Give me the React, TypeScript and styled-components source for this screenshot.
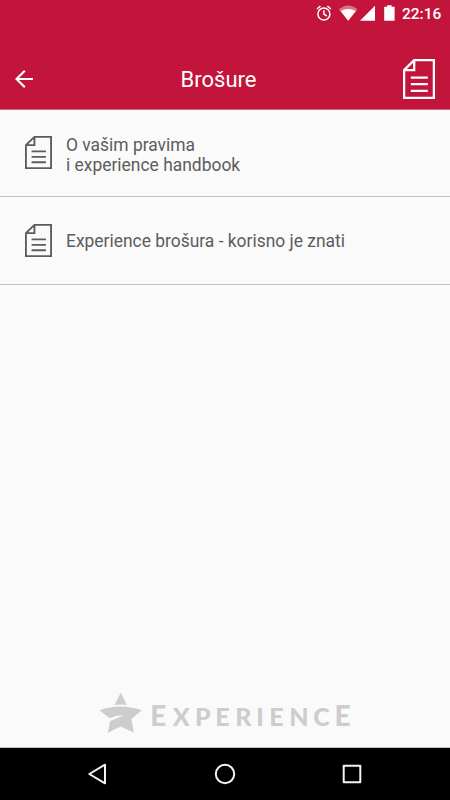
import React from "react";
import styled, { createGlobalStyle } from "styled-components";

const GlobalStyle = createGlobalStyle`
  * { box-sizing: border-box; }
  body { margin: 0; background: #fafafa; }
`;

const Screen = styled.div`
  display: flex;
  flex-direction: column;
  width: 450px;
  height: 800px;
  overflow: hidden;
  background: #fafafa;
  font-family: Roboto, "Liberation Sans", sans-serif;
`;

const StatusBar = styled.div`
  display: flex;
  justify-content: flex-end;
  height: 27px;
  flex: none;
  padding-right: 9px;
  background: #c3143b;
  color: #fff;
`;

const StatusIcons = styled.svg`
  width: 84px;
  height: 27px;
  margin-right: 2px;
`;

const Clock = styled.time`
  width: 39px;
  font-size: 15.5px;
  font-weight: 500;
  line-height: 28px;
  white-space: nowrap;
`;

const AppBar = styled.header`
  display: grid;
  grid-template-columns: 48px 1fr 48px;
  height: 83px;
  flex: none;
  padding-top: 22px;
  background: #c3143b;
  border-bottom: 1px solid #c9687d;
  color: #fff;
`;

const BackButton = styled.button`
  height: 60px;
  padding: 0;
  border: 0;
  background: none;
  color: inherit;
  svg { display: block; }
`;

const Title = styled.h1`
  margin: 0 13px 0 0;
  font-size: 22px;
  font-weight: 400;
  line-height: 62px;
  text-align: center;
`;

const HeaderIcon = styled.div`
  padding: 10px 0 0 1px;
`;

const DocumentSvg = styled.svg`
  display: block;
  flex: none;
`;

const List = styled.ul`
  flex: 1;
  margin: 0;
  padding: 0;
  list-style: none;
`;

const Row = styled.li<{ $height: number }>`
  display: flex;
  align-items: center;
  gap: 14px;
  height: ${(p) => p.$height}px;
  padding: 0 25px 1px;
  border-bottom: 1px solid #c4c4c4;
  color: #5c5c5c;
`;

const RowLabel = styled.span<{ $inset: number }>`
  padding-top: ${(p) => p.$inset}px;
  font-size: 17.43px;
  line-height: 20px;
  white-space: pre-line;
`;

const Footer = styled.footer`
  height: 60px;
  flex: none;
  padding-left: 96px;
  border-bottom: 1px solid #c4c4c4;
  svg { display: block; }
`;

const NavBar = styled.nav`
  display: flex;
  justify-content: center;
  gap: 79px;
  height: 52px;
  flex: none;
  padding-top: 2px;
  background: #000;
`;

const NavButton = styled.button`
  width: 48px;
  height: 48px;
  padding: 0;
  border: 0;
  background: none;
  svg { display: block; }
`;

function DocumentIcon({ width, height, stroke }: { width: number; height: number; stroke: number }) {
  return (
    <DocumentSvg width={width} height={height} viewBox="0 0 32 40" preserveAspectRatio="none" fill="none" stroke="currentColor" strokeWidth={stroke}>
      <path d="M11.2 1.1H30.9V38.9H1.1V11.1L11.2 1.1V11.1H1.1" />
      <path d="M7.8 18.6H24.8M7.8 25.2H24.8M7.8 31.8H24.8" />
    </DocumentSvg>
  );
}

const brochures = [
  { label: "O vašim pravima\ni experience handbook", height: 87, inset: 5 },
  { label: "Experience brošura - korisno je znati", height: 88, inset: 2 },
];

export default function App() {
  return (
    <Screen>
      <GlobalStyle />
      <StatusBar>
        <StatusIcons viewBox="0 0 84 27" fill="none">
          <g stroke="#fff" strokeWidth="1.5">
            <circle cx="7.9" cy="14" r="6" />
            <path d="M7.9 10.2V14.2L10.8 16M.9 9L4.4 6.1M14.9 9L11.4 6.1" />
          </g>
          <path d="M22.8 9.2Q32.2 1.6 41.6 9.2L32.2 20.8Z" fill="#fff" opacity=".4" />
          <path d="M24.6 11Q32.2 7 39.8 11L32.2 20.8Z" fill="#fff" />
          <path d="M59 5.7V20.7H44Z" fill="#fff" />
          <path d="M68.2 6.8H71.1V5.2H75.6V6.8H78.6V20.7H68.2Z" fill="#fff" />
        </StatusIcons>
        <Clock>22:16</Clock>
      </StatusBar>
      <AppBar>
        <BackButton aria-label="Natrag">
          <svg width="48" height="60" fill="none" stroke="#fff" strokeWidth="2.1">
            <path d="M33 30H16.5M24.8 21.8L16.5 30L24.8 38.2" />
          </svg>
        </BackButton>
        <Title>Brošure</Title>
        <HeaderIcon><DocumentIcon width={32} height={40} stroke={2.3} /></HeaderIcon>
      </AppBar>
      <List>
        {brochures.map((b) => (
          <Row key={b.label} $height={b.height}>
            <DocumentIcon width={27} height={33} stroke={2.2} />
            <RowLabel $inset={b.inset}>{b.label}</RowLabel>
          </Row>
        ))}
      </List>
      <Footer>
        <svg width="260" height="59" fill="#cfcccd">
          <path d="M24.7 4.7L31 17Q24.7 16.2 18.5 17Z" />
          <path d="M3.5 22.3Q24 14.8 45.8 22.3L35.4 31L37.9 44.8L24.7 38.6L11.8 44.8L14.2 33Q23 29.6 28 27.3Q20 27 13.7 30.2Z" />
          <g fontFamily="Lato, sans-serif" fontWeight="900">
            <g fontSize="28">
              <text x="54.2" y="38">E</text>
              <text x="238.5" y="38">E</text>
            </g>
            <text x="76.8 99 119.2 139.2 160.3 173.3 193.3 217.2" y="38" fontSize="25">XPERIENC</text>
          </g>
        </svg>
      </Footer>
      <NavBar>
        <NavButton aria-label="Back">
          <svg width="48" height="48" fill="none" stroke="#f4f4f4" strokeWidth="2" strokeLinejoin="round">
            <path d="M31 14.7V33.3L15.3 24Z" />
          </svg>
        </NavButton>
        <NavButton aria-label="Home">
          <svg width="48" height="48" fill="none" stroke="#f4f4f4" strokeWidth="2">
            <circle cx="24" cy="24" r="9.2" />
          </svg>
        </NavButton>
        <NavButton aria-label="Recent">
          <svg width="48" height="48" fill="none" stroke="#f4f4f4" strokeWidth="2" strokeLinejoin="round">
            <rect x="15.7" y="15.7" width="16.6" height="16.6" />
          </svg>
        </NavButton>
      </NavBar>
    </Screen>
  );
}
